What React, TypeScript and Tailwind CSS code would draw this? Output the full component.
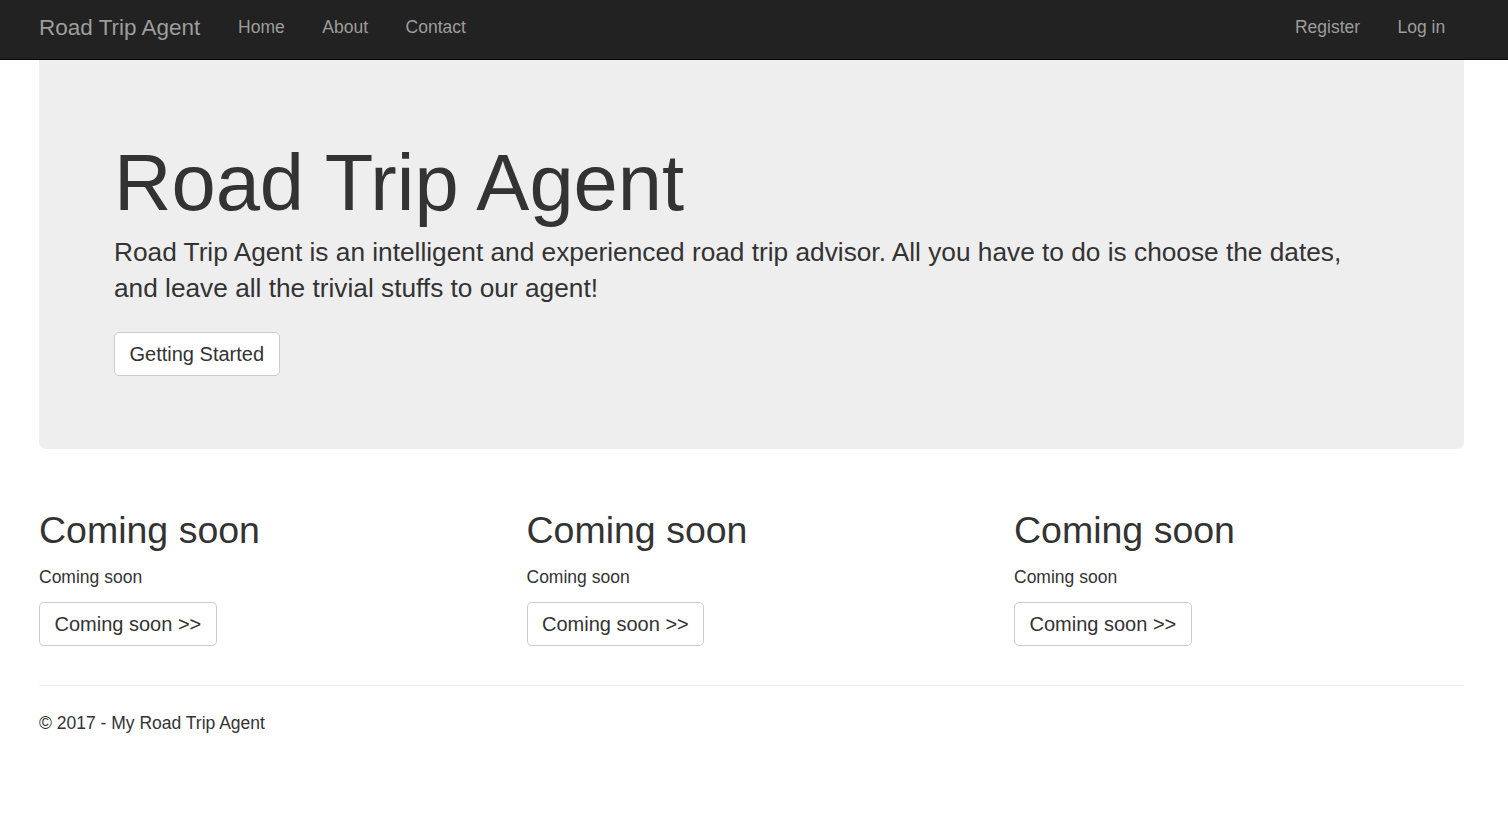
import React from "react";

const font = { fontFamily: '"Liberation Sans", Arial, sans-serif' };

const features = [1, 2, 3];

const App: React.FC = () => {
  return (
    <div className="min-h-screen bg-white text-[#333]" style={font}>
      <nav className="h-[60px] bg-[#222] border-b border-[#080808]">
        <div className="ml-[39px] w-[1425px] flex justify-between">
          <div className="flex">
            <a className="pt-[15px] text-[22.5px] leading-[25px] text-[#9d9d9d]">Road Trip Agent</a>
            <ul className="flex ml-[19px]">
              <li className="px-[18.75px] pt-[15px] text-[17.5px] leading-[25px] text-[#9d9d9d]">Home</li>
              <li className="px-[18.75px] pt-[15px] text-[17.5px] leading-[25px] text-[#9d9d9d]">About</li>
              <li className="px-[18.75px] pt-[15px] text-[17.5px] leading-[25px] text-[#9d9d9d]">Contact</li>
            </ul>
          </div>
          <ul className="flex">
            <li className="px-[18.75px] pt-[15px] text-[17.5px] leading-[25px] text-[#9d9d9d]">Register</li>
            <li className="px-[18.75px] pt-[15px] text-[17.5px] leading-[25px] text-[#9d9d9d]">Log in</li>
          </ul>
        </div>
      </nav>

      <div className="ml-[39px] w-[1425px]">
        <div className="bg-[#eee] rounded-b-[7px] px-[75px] pt-[79px] pb-[73px]">
          <h1 className="text-[79.5px] leading-[1.1]">Road Trip Agent</h1>
          <p className="mt-[8px] text-[26.25px] leading-[36px]">
            Road Trip Agent is an intelligent and experienced road trip advisor. All you have to do is choose the dates, and leave all the trivial stuffs to our agent!
          </p>
          <a className="mt-[26px] inline-flex items-center h-[44px] px-[14.5px] bg-white border border-[#ccc] rounded-[5px] text-[20px]">
            Getting Started
          </a>
        </div>

        <div className="grid grid-cols-3 gap-x-[37.5px] mt-[61px]">
          {features.map((i) => (
            <div key={i}>
              <h2 className="text-[37.5px] leading-[1.1]">Coming soon</h2>
              <p className="mt-[13px] text-[17.5px] leading-[25px]">Coming soon</p>
              <a className="mt-[12px] inline-flex items-center h-[44px] px-[14.5px] bg-white border border-[#ccc] rounded-[5px] text-[20px]">
                Coming soon &gt;&gt;
              </a>
            </div>
          ))}
        </div>

        <hr className="mt-[39px] border-0 border-t border-[#eee]" />
        <footer className="pt-[25px] text-[17.5px] leading-[25px]">© 2017 - My Road Trip Agent</footer>
      </div>
    </div>
  );
};

export default App;
